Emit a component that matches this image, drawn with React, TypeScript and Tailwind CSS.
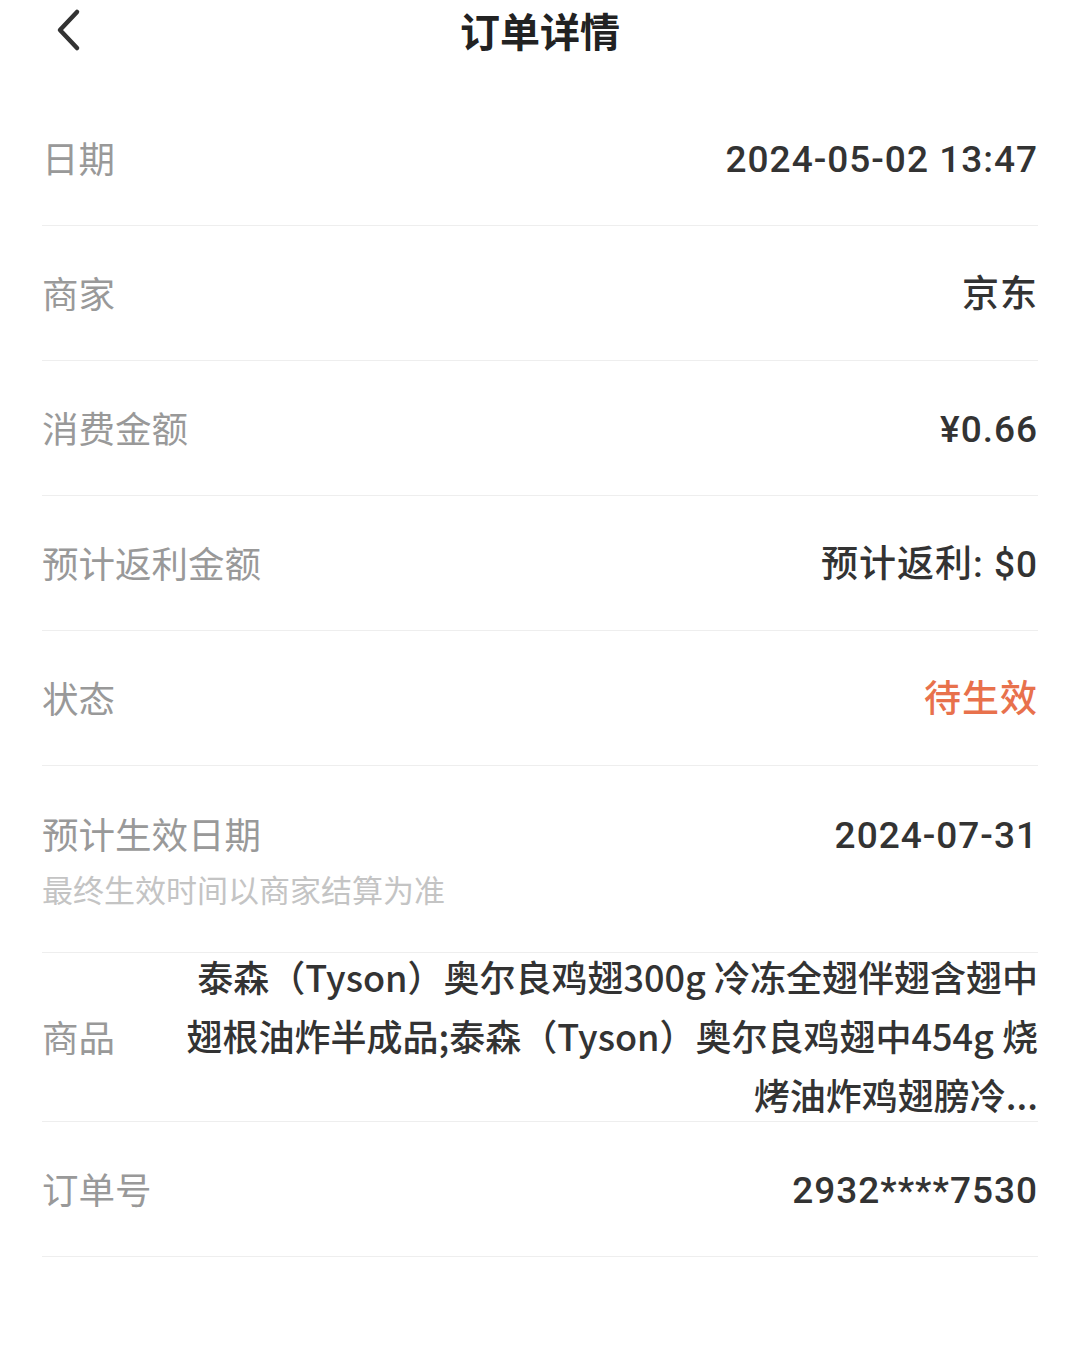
import React from "react";

const font = { fontFamily: '"Noto Sans CJK SC", "Noto Sans", sans-serif' };
const valFont = { fontFamily: 'Roboto, "Noto Sans CJK SC", sans-serif' };

function Row({ label, value, valueClass = "text-[#333333]" }: { label: string; value: string; valueClass?: string }) {
  return (
    <div className="flex h-[135px] items-center justify-between border-b border-[#eeeeee]">
      <span className="text-[36.5px] leading-[36px] text-[#999999]">{label}</span>
      <span className={"mt-[4px] text-[37px] leading-[36px] font-medium tracking-[1px] " + valueClass} style={valFont}>
        {value}
      </span>
    </div>
  );
}

export default function App() {
  return (
    <div className="w-[1080px] h-[1350px] bg-white" style={font}>
      <div className="relative flex h-[91px] items-start justify-center">
        <div className="absolute left-[51px] top-[8px]">
          <svg width="34" height="44" viewBox="0 0 34 44" fill="none">
            <path d="M26 4 L9 22 L26 40" stroke="#333333" strokeWidth="4.5" strokeLinecap="round" strokeLinejoin="round" />
          </svg>
        </div>
        <span className="mt-[8px] text-[40px] leading-[44px] font-bold text-[#222222]">订单详情</span>
      </div>
      <div className="px-[42px]">
        <Row label="日期" value="2024-05-02 13:47" />
        <Row label="商家" value="京东" />
        <Row label="消费金额" value="¥0.66" />
        <Row label="预计返利金额" value="预计返利: $0" />
        <Row label="状态" value="待生效" valueClass="text-[#e8714c]" />
        <div className="flex h-[187px] justify-between border-b border-[#eeeeee] pt-[50px]">
          <div className="flex flex-col">
            <span className="text-[36.5px] leading-[36px] text-[#999999]">预计生效日期</span>
            <span className="mt-[21px] text-[31px] leading-[32px] text-[#c4c4c4]">最终生效时间以商家结算为准</span>
          </div>
          <span className="mt-[2px] text-[37px] leading-[36px] font-medium tracking-[1px] text-[#333333]" style={valFont}>
            2024-07-31
          </span>
        </div>
        <div className="flex h-[169px] items-center justify-between border-b border-[#eeeeee]">
          <span className="text-[36.5px] leading-[36px] text-[#999999]">商品</span>
          <div className="-mt-[4px] flex flex-col items-end text-right text-[36px] leading-[59px] font-medium text-[#333333] whitespace-nowrap">
            <span>泰森（Tyson）奥尔良鸡翅300g 冷冻全翅伴翅含翅中</span>
            <span>翅根油炸半成品;泰森（Tyson）奥尔良鸡翅中454g 烧</span>
            <span>烤油炸鸡翅膀冷...</span>
          </div>
        </div>
        <Row label="订单号" value="2932****7530" />
      </div>
    </div>
  );
}
